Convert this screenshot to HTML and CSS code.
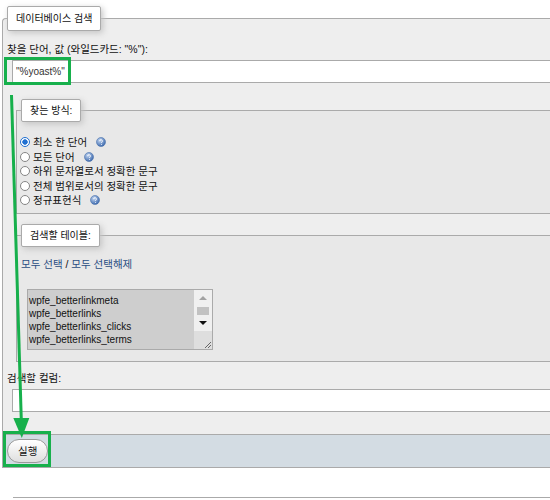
FILE: index.html
```html
<!DOCTYPE html>
<html lang="ko">
<head>
<meta charset="utf-8">
<title>데이터베이스 검색</title>
<link rel="stylesheet" href="styles.css">
</head>
<body>
<div class="page">
  <form class="search-form">
    <fieldset class="main">
      <legend class="legend">데이터베이스 검색</legend>
      <label class="field-label" for="searchString">찾을 단어, 값 (와일드카드: "%"):</label>
      <input class="text-input" id="searchString" type="text" value='"%yoast%"'>

      <fieldset class="sub">
        <legend class="legend sub-legend">찾는 방식:</legend>
        <ul class="radio-list">
          <li><label><input class="radio" type="radio" name="type" checked>최소 한 단어</label><svg class="help" viewBox="0 0 10 10" width="10" height="10"><defs><radialGradient id="hg" cx="0.38" cy="0.32" r="0.75"><stop offset="0" stop-color="#c2d6f2"/><stop offset="1" stop-color="#3462a8"/></radialGradient></defs><circle cx="5" cy="5" r="4.5" fill="url(#hg)" stroke="#4a72ad" stroke-width="0.6"/><path d="M3.7 4.1a1.35 1.35 0 1 1 1.9 1.2v0.7" stroke="#fff" fill="none" stroke-width="0.9"/><circle cx="5.6" cy="7.5" r="0.5" fill="#fff"/></svg></li>
          <li><label><input class="radio" type="radio" name="type">모든 단어</label><svg class="help" viewBox="0 0 10 10" width="10" height="10"><circle cx="5" cy="5" r="4.5" fill="url(#hg)" stroke="#4a72ad" stroke-width="0.6"/><path d="M3.7 4.1a1.35 1.35 0 1 1 1.9 1.2v0.7" stroke="#fff" fill="none" stroke-width="0.9"/><circle cx="5.6" cy="7.5" r="0.5" fill="#fff"/></svg></li>
          <li><label><input class="radio" type="radio" name="type">하위 문자열로서 정확한 문구</label></li>
          <li><label><input class="radio" type="radio" name="type">전체 범위로서의 정확한 문구</label></li>
          <li><label><input class="radio" type="radio" name="type">정규표현식</label><svg class="help" viewBox="0 0 10 10" width="10" height="10"><circle cx="5" cy="5" r="4.5" fill="url(#hg)" stroke="#4a72ad" stroke-width="0.6"/><path d="M3.7 4.1a1.35 1.35 0 1 1 1.9 1.2v0.7" stroke="#fff" fill="none" stroke-width="0.9"/><circle cx="5.6" cy="7.5" r="0.5" fill="#fff"/></svg></li>
        </ul>
      </fieldset>

      <fieldset class="sub tables">
        <legend class="legend sub-legend">검색할 테이블:</legend>
        <p class="select-links"><a href="#">모두 선택</a> / <a href="#">모두 선택해제</a></p>
        <div class="listbox">
          <ul class="options">
            <li>wpfe_betterlinkmeta</li>
            <li>wpfe_betterlinks</li>
            <li>wpfe_betterlinks_clicks</li>
            <li>wpfe_betterlinks_terms</li>
          </ul>
          <div class="scrollbar">
            <div class="sb-btn sb-up"></div>
            <div class="sb-thumb"></div>
            <div class="sb-btn sb-down"></div>
            <div class="sb-corner"><svg class="grip" viewBox="0 0 10 10" width="10" height="10"><path d="M9 3 L3 9 M9 6 L6 9" stroke="#666" stroke-width="1" fill="none"/></svg></div>
          </div>
        </div>
      </fieldset>

      <label class="field-label col-label" for="fieldString">검색할 컬럼:</label>
      <input class="text-input" id="fieldString" type="text">
    </fieldset>
    <div class="footer">
      <button class="btn" type="button">실행</button>
    </div>
  </form>
  <hr class="rule">

  <svg class="annotations" viewBox="0 0 550 500" width="550" height="500">
    <rect x="5.5" y="58.5" width="64" height="25" fill="none" stroke="#17b04c" stroke-width="3"/>
    <rect x="4.5" y="432.5" width="45" height="33" fill="none" stroke="#17b04c" stroke-width="3"/>
    <line x1="11.5" y1="95" x2="21.3" y2="420" stroke="#17b04c" stroke-width="3"/>
    <polygon points="13.3,418 29.3,418 21.8,438" fill="#17b04c"/>
  </svg>
</div>
</body>
</html>
```

FILE: styles.css
```css
html, body {
  margin: 0;
  padding: 0;
  background: #fff;
}

body {
  font-family: "Liberation Sans", "Noto Sans CJK KR", sans-serif;
  font-size: 10.5px;
  color: #111;
}

.page {
  position: relative;
  box-sizing: border-box;
  width: 550px;
  height: 500px;
  padding: 6px 0 0 2px;
  overflow: hidden;
}

.search-form {
  margin: 0;
}

.main {
  margin: 0;
  padding: 0 0 22px 4px;
  min-width: 0;
  border: 1px solid #aaa;
  border-right: 0;
  border-radius: 4px 0 0 0;
  background: #eee;
}

.legend {
  box-sizing: border-box;
  height: 25px;
  line-height: 23px;
  padding: 0 8px;
  border: 1px solid #aaa;
  border-radius: 2px;
  background: #fff;
  box-shadow: 2px 2px 6px #c4c4c4;
  color: #111;
  font-size: 10px;
}

.sub-legend {
  height: 23px;
  line-height: 21px;
}

.field-label {
  display: block;
  margin-top: 11px;
  line-height: 14px;
}

.col-label {
  margin-top: 9px;
}

.text-input {
  display: block;
  box-sizing: border-box;
  width: calc(100% - 5px);
  height: 23px;
  margin: 4px 0 0 5px;
  padding: 0 3px;
  border: 1px solid #aaa;
  border-right: 0;
  background: #fff;
  font: 10px "Liberation Sans", sans-serif;
  color: #333;
  outline: none;
}

.sub {
  margin: 16px 0 0 9px;
  padding: 0 0 5px 4px;
  min-width: 0;
  border: 1px solid #aaa;
  border-right: 0;
  background: #e8e8e8;
}

.tables {
  margin-top: 10px;
  padding-bottom: 11px;
}

.radio-list {
  list-style: none;
  margin: 13px 0 0;
  padding: 0;
}

.radio-list li {
  display: flex;
  align-items: center;
  height: 14.5px;
  line-height: 14.5px;
}

.radio-list label {
  display: flex;
  align-items: center;
}

.radio {
  -webkit-appearance: none;
  appearance: none;
  box-sizing: border-box;
  flex: none;
  width: 10px;
  height: 10px;
  margin: 0 3px 0 -1px;
  border: 1px solid #858585;
  border-radius: 50%;
  background: #fff;
}

.radio:checked {
  border-color: #1f6fd1;
  background: radial-gradient(circle, #1f6fd1 0 2.4px, #fff 3px);
}

.help {
  flex: none;
  margin-left: 9px;
}

.select-links {
  margin: 10px 0 0;
  line-height: 14px;
}

.select-links a {
  color: #2a4d83;
  text-decoration: none;
}

.listbox {
  display: flex;
  box-sizing: border-box;
  width: 186px;
  height: 61px;
  margin: 18px 0 0 6px;
  border: 1px solid #aaa;
  background: #cecece;
}

.options {
  flex: 1;
  list-style: none;
  margin: 0;
  padding: 4px 0 0 1px;
  overflow: hidden;
  font: 10px "Liberation Sans", sans-serif;
  line-height: 13px;
  color: #111;
}

.scrollbar {
  display: flex;
  flex-direction: column;
  width: 18px;
  background: #f0f0f0;
}

.sb-btn {
  display: flex;
  align-items: center;
  justify-content: center;
  height: 16px;
}

.sb-up::before {
  content: "";
  border-left: 4px solid transparent;
  border-right: 4px solid transparent;
  border-bottom: 4px solid #a3a3a3;
}

.sb-down::before {
  content: "";
  border-left: 4px solid transparent;
  border-right: 4px solid transparent;
  border-top: 4px solid #111;
}

.sb-thumb {
  height: 8px;
  margin: 1px 3px 0;
  background: #c2c2c2;
}

.sb-corner {
  flex: 1;
  display: flex;
  align-items: flex-end;
  justify-content: flex-end;
  background: #dedede;
}

.footer {
  box-sizing: border-box;
  padding: 4px;
  border: 1px solid #aaa;
  border-top: 0;
  border-right: 0;
  background: #d3dce3;
}

.btn {
  display: block;
  height: 24px;
  padding: 0 10px;
  border: 1px solid #9a9a9a;
  border-radius: 12px;
  background: linear-gradient(#fff, #dedede);
  font: 10.5px "Liberation Sans", "Noto Sans CJK KR", sans-serif;
  color: #111;
}

.rule {
  height: 0;
  margin: 29px 0 0 11px;
  border: 0;
  border-top: 1px solid #aaa;
}

.annotations {
  position: absolute;
  left: 0;
  top: 0;
  pointer-events: none;
}
```
